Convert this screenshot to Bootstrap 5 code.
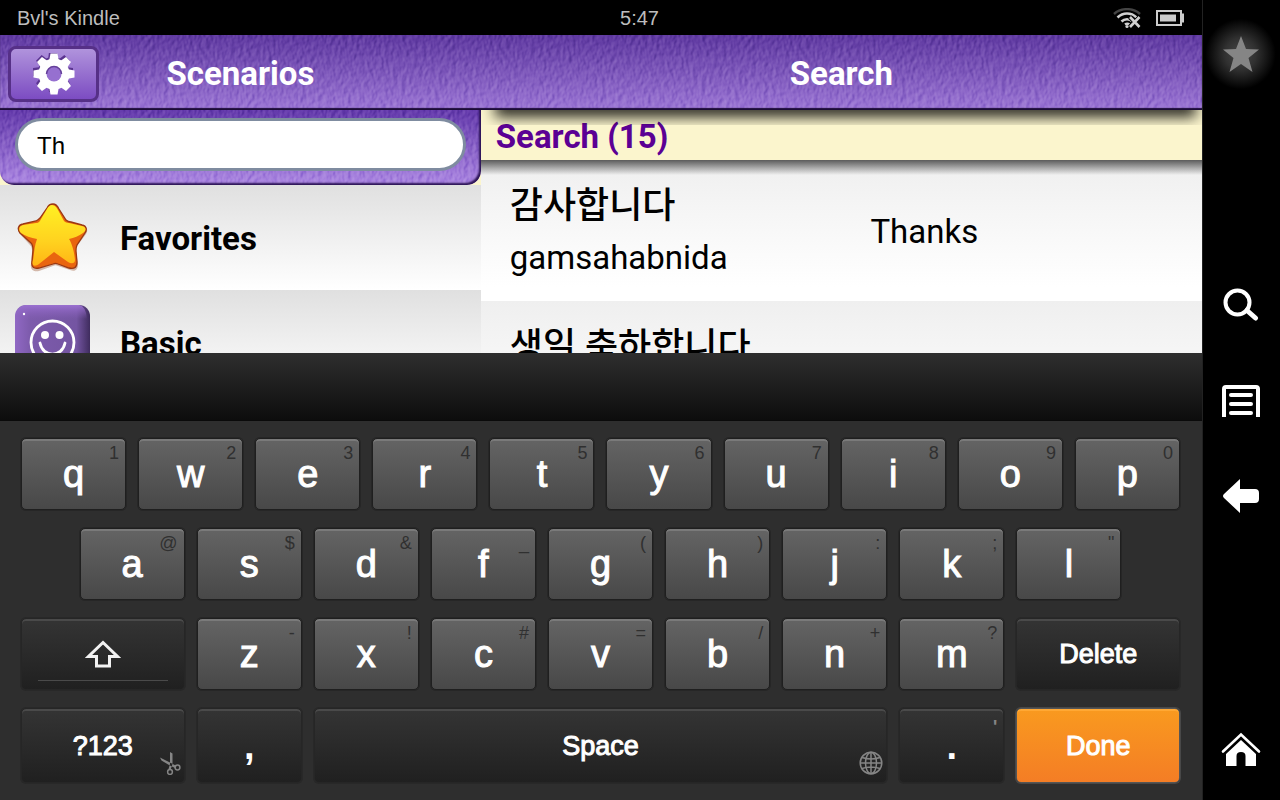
<!DOCTYPE html>
<html lang="en">
<head>
<meta charset="utf-8">
<meta name="viewport" content="width=device-width, initial-scale=1">
<title>Scenarios</title>
<link href="https://cdn.jsdelivr.net/npm/bootstrap@5.3.0/dist/css/bootstrap.min.css" rel="stylesheet">
<style>
  :root {
    --rail: 78px;
    --ui: "Liberation Sans", Arial, sans-serif;
    --app: Roboto, "Noto Sans CJK KR", sans-serif;
    --grain: url("data:image/svg+xml,%3Csvg xmlns='http://www.w3.org/2000/svg' width='300' height='150'%3E%3Cfilter id='g' x='0' y='0' width='100%25' height='100%25' color-interpolation-filters='sRGB'%3E%3CfeTurbulence type='fractalNoise' baseFrequency='.24 .16' numOctaves='2' seed='8' stitchTiles='stitch' result='n'/%3E%3CfeDiffuseLighting in='n' surfaceScale='.9' diffuseConstant='.74' lighting-color='white'%3E%3CfeDistantLight azimuth='205' elevation='45'/%3E%3C/feDiffuseLighting%3E%3C/filter%3E%3Crect width='300' height='150' filter='url(%23g)'/%3E%3C/svg%3E");
  }
  body { background: #000; font-family: var(--app); color: #000; }
  .device { height: 100vh; }
  .app { flex: 1 1 0; min-width: 0; }
  .split { display: grid; grid-template-columns: 2fr 3fr; }

  .status { flex: none; display: grid; grid-template-columns: 1fr auto 1fr; width: 100vw; height: 35px; padding-left: 17px; padding-right: calc(var(--rail) + 18px); font: 20px/36px var(--ui); color: #bdbdbd; background: #000; }
  .status .clock { padding-left: var(--rail); }

  .titlebar { flex: none; height: 75px; background: var(--grain), linear-gradient(#5d379f, #9a74d4); background-blend-mode: soft-light; box-shadow: inset 0 -2px 1px #1c0c38; }
  .titlebar h1 { font-size: 33px; line-height: 36px; font-weight: 700; color: #fff; margin: 0; padding-top: 2px; }
  .settings { left: 8px; top: 11px; width: 91px; height: 56px; border: 3px solid #563087; border-radius: 8px; background: linear-gradient(#b093dc, #7c4cc2); }

  .content { flex: 1 1 0; min-height: 0; grid-template-rows: 100%; }
  .pane { background: #fbf5cd; }
  .finder { height: 75px; padding: 8px 15px 0; border-radius: 0 0 14px 14px; background: var(--grain), linear-gradient(#6238aa, #ab86e2); background-blend-mode: soft-light; box-shadow: inset -2px -2px 2px #2c1456; }
  .finder input { height: 53px; border: 3px solid #7f8ca0; border-radius: 27px; padding: 2px 19px 0; font: 24px var(--ui); color: #000; background: #fff; }
  .topic { height: 105px; padding: 2px 0 0 15px; gap: 30px; font-size: 33px; font-weight: 700; color: #000; text-decoration: none; background: linear-gradient(#e0e0e0, #fff); }
  .topic svg { width: 75px; height: 75px; flex: none; margin-bottom: 2px; }

  .results h2 { height: 50px; margin: 0; padding: 9px 15px 0; font-size: 33px; line-height: 36px; font-weight: 700; color: #5b0094; background: #fbf5cd; }
  .cast { height: 15px; top: 0; left: 0; right: 0; overflow: hidden; }
  .cast::before { content: ""; display: block; height: 10px; margin: -10px 10px 0 18px; box-shadow: 0 3px 14px 4px rgba(0,0,0,.85); }
  .phrase { height: 141px; padding-top: 16px; font-size: 33px; line-height: 44px; background: linear-gradient(#efefef, #fff 90%); }
  .phrase > div { padding: 0 0 0 29px; }
  .phrase .hangul { font-size: 36px; line-height: 60px; font-weight: 500; }
  .phrase .meaning { padding-top: 34px; }
  .list-top { position: relative; }
  .list-top::before { content: ""; position: absolute; inset: 0 0 auto; height: 15px; background: linear-gradient(rgba(0,0,0,.62), rgba(0,0,0,0)); }

  .suggest { flex: none; height: 68px; background: linear-gradient(#2e2e2e, #0d0d0d); border-bottom: 1px solid #0a0a0a; }
  .keys { flex: none; display: grid; grid-template-columns: repeat(20, 1fr); grid-template-rows: 72px 72px 72px 75px; gap: 18px 12px; padding: 17px 22px 17px 21px; background: #2e2e2e; font-family: var(--ui); }
  .key { grid-column: span 2; position: relative; min-width: 0; padding: 0; border: 1px solid #1f1f1f; border-radius: 5px; color: #fff; font-size: 38px; line-height: 68px; background: linear-gradient(#646464, #484848); box-shadow: 0 0 0 1px #262626, inset 0 2px 0 #7a7a7a; -webkit-text-stroke: 1px #fff; }
  .key small { position: absolute; top: 5px; right: 6px; font-size: 18px; line-height: 18px; color: #303030; -webkit-text-stroke: 0; }
  .key.wide { grid-column: span 3; }
  .key.space { grid-column: span 10; }
  .key.indent { grid-column: 2 / span 2; }
  .key.nextrow { grid-column: 1 / span 3; }
  .key.dark { border-color: #262626; background: linear-gradient(#343434, #202020); box-shadow: 0 0 0 1px #282828, inset 0 2px 0 #4a4a4a; }
  .key.dark small { top: 9px; color: #858585; font-weight: 700; }
  .key.word { font-size: 27px; }
  .key.stop { font-weight: 700; -webkit-text-stroke: 0; }
  .key.done { border-color: #555; background: linear-gradient(#f99a1f, #f47d25); box-shadow: 0 0 0 1px #484848, inset 0 2px 0 #ffa834; }
  .corner { position: absolute; right: 3px; bottom: 7px; }
  .bar { position: absolute; left: 16px; right: 16px; bottom: 8px; height: 1px; background: #4a4a4a; }

  .rail { flex: 0 0 var(--rail); padding-right: 2px; border-left: 1px solid #222; background: #000; z-index: 2; }
  .rail button { display: block; border: 0; padding: 0; background: none; line-height: 0; margin-bottom: 61px; }
  .rail .glow { width: 75px; height: 76px; margin: 16px 0 196px; background: radial-gradient(circle, #484848 0, #303030 30%, #000 66%); }
  .rail .home { margin: auto 0 33px; }
</style>
</head>
<body>
<div class="device d-flex overflow-hidden">
  <div class="app d-flex flex-column">
    <div class="status">
      <span>Bvl's Kindle</span>
      <span class="clock">5:47</span>
      <span class="d-flex justify-content-end align-items-center" style="gap:15px">
        <svg width="28" height="21" viewBox="0 0 28 21" fill="none" aria-label="Wi-Fi">
          <path d="M1 6C8-.5 20-.5 27 6" stroke="#444" stroke-width="2.4"/>
          <path d="M4.500 9.500C10 4.200 18 4.200 23.500 9.500M8.500 13.500c3-3 8-3 11 0M12 16.500c1.500-1 3-1 4.500 0" stroke="#d0d0d0" stroke-width="2.600"/>
          <circle cx="14" cy="18.500" r="1.600" fill="#d0d0d0"/>
          <path d="M17 9l10 10M27 9L17 19" stroke="#000" stroke-width="5"/>
          <path d="M17 9l9.500 10M26.500 9L17 19" stroke="#d0d0d0" stroke-width="2.600"/>
        </svg>
        <svg width="28" height="16" viewBox="0 0 28 16" aria-label="Battery"><path d="M1 1h24v14H1z" fill="none" stroke="#ccc" stroke-width="2"/><path d="M4 4.500h16v7H4zM25 3.500h3v9h-3z" fill="#ccc"/></svg>
      </span>
    </div>

    <header class="titlebar split position-relative align-items-center text-center">
      <button class="settings position-absolute p-0" aria-label="Settings">
        <svg width="46" height="42" viewBox="-23 -21 46 42">
          <g fill="#5b3490" transform="translate(-1 -2)"><circle r="15"/><path id="t1" d="M-4-20h8l1 8H-5zM-4 20h8l1-8H-5z"/><use href="#t1" transform="rotate(45)"/><use href="#t1" transform="rotate(90)"/><use href="#t1" transform="rotate(135)"/></g>
          <g fill="#fff"><circle r="15.500"/><path id="t2" d="M-3.500-20.500h7l1.500 8H-5zM-3.500 20.500h7l1.500-8H-5z"/><use href="#t2" transform="rotate(45)"/><use href="#t2" transform="rotate(90)"/><use href="#t2" transform="rotate(135)"/></g>
          <circle r="7.500" fill="#9670d0"/><path d="M-7.500 0a7.500 7.500 0 0 1 15 0" fill="none" stroke="#65409a" stroke-width="1.500"/>
        </svg>
      </button>
      <h1>Scenarios</h1>
      <h1>Search</h1>
    </header>

    <main class="content split overflow-hidden">
      <section class="pane overflow-hidden">
        <div class="finder"><input class="w-100 d-block" type="text" value="Th" aria-label="Search phrases"></div>
        <a class="topic d-flex align-items-center" href="#">
          <svg viewBox="0 0 75 75">
            <defs><linearGradient id="gold" x2="0" y2="1"><stop offset="0" stop-color="#fff023"/><stop offset=".6" stop-color="#ffd21f"/><stop offset="1" stop-color="#ffb515"/></linearGradient></defs>
            <g transform="translate(1 0)">
            <path d="M37 5c3 0 5 3 6 5l7 11c1 1 3 2 5 2l12 3c5 1 5 5 3 8l-9 12c-1 2-1 4-1 6l2 12c0 6-3 8-8 6l-12-4c-2-1-3-1-5 0l-14 5c-5 1-9-1-8-7l1-12c0-3 0-5-2-7L4 34c-3-4-2-8 3-9l13-3c2-1 3-2 4-3l7-10c1-2 3-4 6-4z" fill="#8d3f18" opacity=".35"/>
            <path d="M37 4c3 0 5 3 6 5l7 11c1 1 3 2 5 2l11 3c5 1 5 5 3 8l-8 12c-1 2-1 4-1 6l1 11c0 6-3 7-8 6l-11-4c-2-1-3-1-5 0l-14 4c-5 1-8-1-7-6l1-12c0-3 0-5-2-7L4 33c-3-4-2-8 3-9l13-3c2-1 3-2 4-3l7-10c1-2 3-4 6-4z" fill="#e9650f" stroke="#9a3812" stroke-width="1.300"/>
            <path d="M36 5c3 0 5 3 6 5l6 11c1 1 3 2 5 2l13 3c5 1 4 5 1 7-4 3-9 5-14 6 2 3 5 10 6 21 0 4-4 4-7 2L38 52 23 64c-4 3-8 2-6-4 1-4 1-13 4-21-6-1-12-3-16-6-3-3-2-7 2-8l13-2c3 0 4-2 5-4l6-10c1-2 3-4 5-4z" fill="url(#gold)"/>
            </g>
          </svg>
          <span>Favorites</span>
        </a>
        <a class="topic d-flex align-items-center" href="#">
          <svg viewBox="0 0 75 75">
            <defs><linearGradient id="tile"><stop offset="0" stop-color="#9068c4"/><stop offset=".2" stop-color="#7d5bac"/><stop offset=".82" stop-color="#7455a2"/><stop offset="1" stop-color="#3f2c5e"/></linearGradient><linearGradient id="shine" x2="0" y2="1"><stop offset="0" stop-color="#9a70d0"/><stop offset="1" stop-color="#8a62bd" stop-opacity="0"/></linearGradient></defs>
            <rect width="75" height="75" rx="11" fill="url(#tile)"/>
            <path d="M11 0h53q7 1 8 14H0Q1 1 11 0z" fill="url(#shine)"/>
            <circle cx="9" cy="9" r="1.200" fill="#fff"/>
            <circle cx="37.500" cy="37.500" r="21.500" fill="none" stroke="#fff" stroke-width="2.800"/>
            <circle cx="30" cy="30" r="4" fill="#fff"/><circle cx="44.500" cy="30" r="4" fill="#fff"/>
            <path d="M25 38c3 15 22 15 25 0" fill="none" stroke="#fff" stroke-width="2.800" stroke-linecap="round"/>
          </svg>
          <span>Basic</span>
        </a>
      </section>

      <section class="results pane position-relative overflow-hidden">
        <h2>Search (15)</h2>
        <div class="cast position-absolute"></div>
        <div class="list-top">
          <div class="phrase row g-0">
            <div class="col-6"><div class="hangul" lang="ko">감사합니다</div><div>gamsahabnida</div></div>
            <div class="col-6 meaning">Thanks</div>
          </div>
          <div class="phrase row g-0">
            <div class="col-12"><div class="hangul" lang="ko">생일 축하합니다</div></div>
          </div>
        </div>
      </section>
    </main>

    <div class="suggest"></div>
    <div class="keys">
      <button class="key">q<small>1</small></button><button class="key">w<small>2</small></button><button class="key">e<small>3</small></button><button class="key">r<small>4</small></button><button class="key">t<small>5</small></button><button class="key">y<small>6</small></button><button class="key">u<small>7</small></button><button class="key">i<small>8</small></button><button class="key">o<small>9</small></button><button class="key">p<small>0</small></button>
      <button class="key indent">a<small>@</small></button><button class="key">s<small>$</small></button><button class="key">d<small>&amp;</small></button><button class="key">f<small>_</small></button><button class="key">g<small>(</small></button><button class="key">h<small>)</small></button><button class="key">j<small>:</small></button><button class="key">k<small>;</small></button><button class="key">l<small>"</small></button>
      <button class="key dark nextrow" aria-label="Shift">
        <svg class="d-block mx-auto" width="36" height="28" viewBox="0 0 36 28"><path d="M18 2.500L3.500 16.500H11.500V26H24.500V16.500H32.500z" fill="none" stroke="#f2f2f2" stroke-width="3"/></svg>
        <span class="bar"></span>
      </button><button class="key">z<small>-</small></button><button class="key">x<small>!</small></button><button class="key">c<small>#</small></button><button class="key">v<small>=</small></button><button class="key">b<small>/</small></button><button class="key">n<small>+</small></button><button class="key">m<small>?</small></button><button class="key dark word wide">Delete</button>
      <button class="key dark word nextrow">?123
        <svg class="corner" width="21" height="23" viewBox="0 0 21 23" fill="none" stroke="#858585" stroke-width="1.500"><path d="M10 0l2.500 1.500V12l-2 6-2-1 1.500-5zM0 5.500l1.500 3L9 13l6 3 1.500-2L9 10z" fill="#858585" stroke="none"/><circle cx="10" cy="20" r="2.400"/><circle cx="17.500" cy="15.500" r="2.400"/></svg>
      </button><button class="key dark stop">,</button><button class="key dark word space">Space
        <svg class="corner" width="24" height="24" viewBox="0 0 24 24" fill="none" stroke="#858585" stroke-width="1.500"><circle cx="12" cy="12" r="10.800"/><ellipse cx="12" cy="12" rx="5.500" ry="10.800"/><path d="M12 1v22M1 12h22M3 6.500q9 3 18 0M3 17.500q9-3 18 0"/></svg>
      </button><button class="key dark stop">.<small>'</small></button><button class="key done word wide">Done</button>
    </div>
  </div>

  <nav class="rail d-flex flex-column align-items-center" aria-label="Device">
    <button class="glow" aria-label="Favorites"><svg width="38" height="38" viewBox="0 0 38 38"><path d="M19 1l5 13 13 .500-10.500 8.500L30.500 37 19 29 7.500 37l4-14L1 14.500 14 14z" fill="#858585"/></svg></button>
    <button aria-label="Search"><svg width="36" height="36" viewBox="0 0 36 36" fill="none" stroke="#fff"><circle cx="14.500" cy="14.500" r="12" stroke-width="4"/><path d="M24 22.500l8.500 7.500" stroke-width="5" stroke-linecap="round"/></svg></button>
    <button aria-label="Menu"><svg width="38" height="32" viewBox="0 0 38 32" fill="none" stroke="#fff" stroke-width="4"><path d="M2 32V4q0-2 2-2h30q2 0 2 2v28"/><path d="M9 10h20M9 19h20M9 28h20" stroke-linecap="round"/></svg></button>
    <button aria-label="Back"><svg width="38" height="36" viewBox="0 0 38 36"><path d="M18 1v10h15q4 0 4 4v6q0 4-4 4H18v10L2 20q-2-2 0-4z" fill="#fff"/></svg></button>
    <button class="home" aria-label="Home"><svg width="40" height="36" viewBox="0 0 40 36"><path d="M2 20.500L20 3.500l18 17" fill="none" stroke="#fff" stroke-width="2.600" stroke-linecap="round"/><path d="M20 9l15 14V35H24.500V25q0-4-4.500-4t-4.500 4V35H5V23z" fill="#fff"/></svg></button>
  </nav>
</div>
<script src="https://cdn.jsdelivr.net/npm/bootstrap@5.3.0/dist/js/bootstrap.bundle.min.js"></script>
</body>
</html>
